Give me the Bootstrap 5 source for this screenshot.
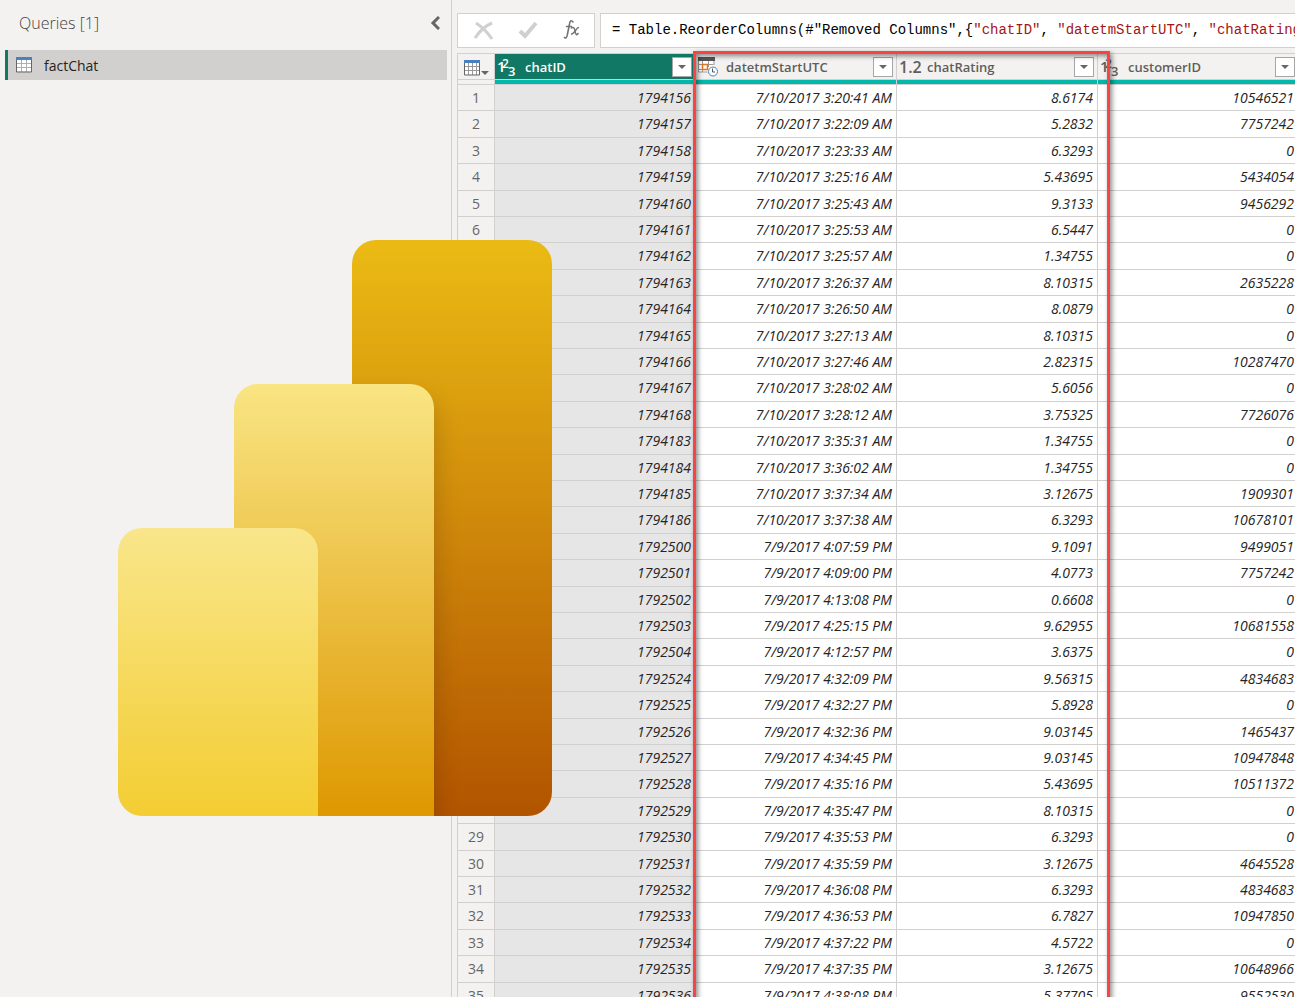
<!DOCTYPE html>
<html lang="en">
<head>
<meta charset="utf-8">
<meta name="viewport" content="width=device-width, initial-scale=1">
<title>Power Query Editor</title>
<link href="https://cdn.jsdelivr.net/npm/bootstrap@5.3.0/dist/css/bootstrap.min.css" rel="stylesheet">
<style>
  :root { --pane: #f3f2f1; --line: #d1d0ce; --green: #117865; --teal: #01b8aa; }
  body { background: var(--pane); font-family: "Open Sans", "Noto Sans", sans-serif; color: #252423; }
  .query-pane { width: 452px; border-right: 1px solid var(--line); padding: 0 4px 0 5px; }
  .pane-title { font-size: 16px; line-height: 24px; font-weight: 300; font-family: "Open Sans", sans-serif; color: #444; }
  .pane-head { height: 50px; padding: 0 7px 4px 14px; }
  .query-item { height: 30px; background: #d2d0ce; border-left: 3px solid var(--green); font-size: 14px; color: #252423; padding-left: 8px; gap: 11px; }
  .editor { padding: 13px 0 0 5px; }
  .bar-box { height: 35px; background: #fff; border: 1px solid var(--line); }
  .bar-tools { width: 138px; padding: 0 6px 0 10px; }
  .bar-tools button, .corner-btn { border: 0; background: none; padding: 0; display: flex; }
  .bar-tools button { width: 32px; justify-content: center; }
  .formula { border-right: 0; margin-left: 5px; font: 14px/33px "Liberation Mono", monospace; color: #000; padding-left: 11px; white-space: pre; }
  .formula .str { color: #a31515; }
  .grid-wrap { margin-top: 5px; }
  .data-grid { table-layout: fixed; width: 842px; border-collapse: separate; border-spacing: 0; border-left: 1px solid var(--line); border-top: 1px solid var(--line); }
  .data-grid th, .data-grid td { border-right: 1px solid var(--line); border-bottom: 1px solid var(--line); padding: 0; white-space: nowrap; }
  .col-num { width: 37px; }
  .col-data { width: 201px; }
  .data-grid thead th { height: 26px; background: var(--pane); font-size: 13px; line-height: 20px; font-weight: 600; color: #605e5c; }
  .data-grid thead th.picked { background: var(--green); color: #fff; }
  .head-cell { padding: 0 3px 0 2px; }
  .type-slot { width: 28px; display: flex; }
  .type-slot svg, .bar-tools svg { overflow: visible; }
  .drop-btn { width: 20px; height: 20px; padding: 0; border: 1px solid #a6a6a6; background: #fff; display: flex; align-items: center; justify-content: center; }
  .data-grid .quality td { height: 5px; line-height: 0; background: var(--teal); }
  .data-grid .quality td:first-child { background: var(--pane); }
  .data-grid tbody td { height: 26px; padding-right: 4px; background: #fff; text-align: right; font-size: 14px; line-height: 20px; font-style: italic; color: #252423; }
  .data-grid tbody th { background: var(--pane); text-align: center; font-size: 14px; line-height: 20px; font-weight: 400; color: #666; }
  .data-grid tbody tr:nth-child(5n+2) td, .data-grid tbody tr:nth-child(5n+4) td { height: 27px; }
  .data-grid tbody td:nth-child(2) { background: #e6e6e6; }
  .highlight { position: absolute; left: 236px; top: -2px; width: 417px; bottom: -10px; border: 3px solid #fb4343; box-shadow: 2px 2px 5px rgba(0,0,0,.45), inset 2px 2px 5px rgba(0,0,0,.45); pointer-events: none; }
  .pbi-logo { position: absolute; left: 118px; top: 240px; }
</style>
</head>
<body class="position-relative vh-100 overflow-hidden">
<div class="d-flex h-100">
  <aside class="query-pane flex-shrink-0">
    <div class="pane-head d-flex align-items-center justify-content-between">
      <h1 class="pane-title m-0">Queries [1]</h1>
      <button class="btn p-0 border-0 d-flex" aria-label="Collapse pane">
        <svg width="10" height="14" viewBox="0 0 10 14"><path d="M9 1L3 7l6 6" fill="none" stroke="#666" stroke-width="3"/></svg>
      </button>
    </div>
    <a href="#" class="query-item d-flex align-items-center text-decoration-none">
      <svg width="17" height="16" viewBox="0 0 17 16"><path fill="#fff" d="M.5.5h15v14H.5z"/><path d="M5.5 3v12M10.500 3v12M1 6.500h15M1 10.500h15" stroke="#b0b0b0" fill="none"/><path d="M.5 1v14h15V1" fill="none" stroke="#666"/><path fill="#4a80bd" d="M0 0h16v3H0z"/></svg>
      <span>factChat</span>
    </a>
  </aside>

  <main class="editor flex-grow-1 overflow-hidden">
    <div class="d-flex">
      <div class="bar-box bar-tools d-flex align-items-center justify-content-between flex-shrink-0">
        <button aria-label="Cancel"><svg width="20" height="18" viewBox="0 0 20 18"><path d="M2 1c6 4 12 10 16 16M18 1C11 4 5 10 1 16" fill="none" stroke="#d0d0d0" stroke-width="3"/></svg></button>
        <button aria-label="Accept"><svg width="18" height="18" viewBox="0 0 18 18"><path d="M1 9l5 5L17 1" fill="none" stroke="#d0d0d0" stroke-width="4"/></svg></button>
        <button aria-label="Insert step"><svg width="16" height="21" viewBox="0 0 16 21" fill="none" stroke="#737373" stroke-linecap="round"><path d="M9 2C7-.5 6 1 5.500 4L3.500 14C3 17.500 2 18.500.5 17.500" stroke-width="1.600"/><path d="M2.500 6.500h5M7.500 8c2-1.500 3 0 3.500 3s1.500 5 3 2.500" stroke-width="1.500"/><path d="M14.500 7.500c-2 0-4 6.500-7 6.500" stroke-width="1.400"/></svg></button>
      </div>
      <div class="bar-box formula flex-grow-1 overflow-hidden" role="textbox" aria-label="Formula">= Table.ReorderColumns(#"Removed Columns",{<span class="str">"chatID"</span>, <span class="str">"datetmStartUTC"</span>, <span class="str">"chatRating"</span></div>
    </div>

    <div class="grid-wrap position-relative">
      <table class="data-grid">
        <colgroup><col class="col-num"><col class="col-data"><col class="col-data"><col class="col-data"><col class="col-data"></colgroup>
        <thead>
          <tr>
            <th scope="col"><button class="corner-btn mx-auto" aria-label="Table options"><svg width="25" height="18" viewBox="0 0 25 18"><g transform="translate(0 2)"><path fill="#fff" d="M.5.5h15v14H.5z"/><path d="M4.500 3v12M8.500 3v12M12.500 3v12M1 6.500h15M1 10.500h15" stroke="#999" fill="none"/><path d="M.5 1v14h15V1" fill="none" stroke="#666"/><path fill="#4a80bd" d="M0 0h16v3H0z"/><path fill="#666" d="M17 11h8l-4 4z"/></g></svg></button></th>
            <th scope="col" class="picked"><div class="head-cell d-flex align-items-center"><span class="type-slot"><svg width="18" height="18" viewBox="0 0 18 18"><use href="#whole"/></svg></span><span class="flex-grow-1">chatID</span><button class="drop-btn" aria-label="Filter chatID"><svg width="8" height="4"><path fill="#666" d="M0 0h8L4 4z"/></svg></button></div></th>
            <th scope="col"><div class="head-cell d-flex align-items-center"><span class="type-slot"><svg width="21" height="20" viewBox="0 0 21 20"><path fill="#fff" d="M1 3h15v12H1z"/><path fill="#555" d="M0 0h17v4H0z"/><path d="M.5 4v11h9M4.500 4v11M10.500 4v6M.5 7.500h15M.5 12.500h9M16 4v4" fill="none" stroke="#999"/><path d="M4.500 7.500h5v5h-5z" fill="#fff" stroke="#e8731c" stroke-width="1.500"/><circle cx="15" cy="14.500" r="4.500" fill="#fff" stroke="#4a80bd"/><path d="M14.500 11.500v3.500H17" fill="none" stroke="#555"/></svg></span><span class="flex-grow-1">datetmStartUTC</span><button class="drop-btn" aria-label="Filter datetmStartUTC"><svg width="8" height="4"><path fill="#666" d="M0 0h8L4 4z"/></svg></button></div></th>
            <th scope="col"><div class="head-cell d-flex align-items-center"><span class="type-slot fs-6">1.2</span><span class="flex-grow-1">chatRating</span><button class="drop-btn" aria-label="Filter chatRating"><svg width="8" height="4"><path fill="#666" d="M0 0h8L4 4z"/></svg></button></div></th>
            <th scope="col"><div class="head-cell d-flex align-items-center"><span class="type-slot"><svg width="18" height="18" viewBox="0 0 18 18"><use href="#whole"/></svg></span><span class="flex-grow-1">customerID</span><button class="drop-btn" aria-label="Filter customerID"><svg width="8" height="4"><path fill="#666" d="M0 0h8L4 4z"/></svg></button></div></th>
          </tr>
          <tr class="quality"><td></td><td></td><td></td><td></td><td></td></tr>
        </thead>
        <tbody id="rows"></tbody>
      </table>
      <div class="highlight"></div>
    </div>
  </main>
</div>

<svg class="pbi-logo" width="434" height="576" viewBox="0 0 434 576" role="img" aria-label="Power BI">
  <defs>
    <g id="whole" fill="currentColor" font-family="Open Sans, sans-serif" font-weight="600"><text x="0" y="14" font-size="15">1</text><text x="5" y="10" font-size="12">2</text><text x="11" y="18" font-size="13">3</text></g>
    <linearGradient id="tall" x2="0" y2="1"><stop stop-color="#ebbb14"/><stop offset="1" stop-color="#b25400"/></linearGradient>
    <linearGradient id="mid" x2="0" y2="1"><stop stop-color="#f9e583"/><stop offset="1" stop-color="#de9800"/></linearGradient>
    <linearGradient id="low" x2="0" y2="1"><stop stop-color="#f9e68b"/><stop offset="1" stop-color="#f3cd32"/></linearGradient>
    <filter id="soft" x="-20%" y="-20%" width="140%" height="140%"><feGaussianBlur stdDeviation="11"/></filter>
    <clipPath id="tall-clip"><path d="M258 0h152a24 24 0 0 1 24 24v528a24 24 0 0 1-24 24H234V24a24 24 0 0 1 24-24z"/></clipPath>
  </defs>
  <path fill="url(#tall)" d="M258 0h152a24 24 0 0 1 24 24v528a24 24 0 0 1-24 24H234V24a24 24 0 0 1 24-24z"/>
  <g clip-path="url(#tall-clip)"><rect x="116" y="156" width="204" height="440" rx="24" fill="#000" opacity=".14" filter="url(#soft)"/></g>
  <path fill="url(#mid)" d="M140 144h152a24 24 0 0 1 24 24v408H116V168a24 24 0 0 1 24-24z"/>
  <path fill="url(#low)" d="M24 288h152a24 24 0 0 1 24 24v264H24a24 24 0 0 1-24-24V312a24 24 0 0 1 24-24z"/>
</svg>

<script>
const records = `1794156|7/10/2017 3:20:41 AM|8.6174|10546521
1794157|7/10/2017 3:22:09 AM|5.2832|7757242
1794158|7/10/2017 3:23:33 AM|6.3293|0
1794159|7/10/2017 3:25:16 AM|5.43695|5434054
1794160|7/10/2017 3:25:43 AM|9.3133|9456292
1794161|7/10/2017 3:25:53 AM|6.5447|0
1794162|7/10/2017 3:25:57 AM|1.34755|0
1794163|7/10/2017 3:26:37 AM|8.10315|2635228
1794164|7/10/2017 3:26:50 AM|8.0879|0
1794165|7/10/2017 3:27:13 AM|8.10315|0
1794166|7/10/2017 3:27:46 AM|2.82315|10287470
1794167|7/10/2017 3:28:02 AM|5.6056|0
1794168|7/10/2017 3:28:12 AM|3.75325|7726076
1794183|7/10/2017 3:35:31 AM|1.34755|0
1794184|7/10/2017 3:36:02 AM|1.34755|0
1794185|7/10/2017 3:37:34 AM|3.12675|1909301
1794186|7/10/2017 3:37:38 AM|6.3293|10678101
1792500|7/9/2017 4:07:59 PM|9.1091|9499051
1792501|7/9/2017 4:09:00 PM|4.0773|7757242
1792502|7/9/2017 4:13:08 PM|0.6608|0
1792503|7/9/2017 4:25:15 PM|9.62955|10681558
1792504|7/9/2017 4:12:57 PM|3.6375|0
1792524|7/9/2017 4:32:09 PM|9.56315|4834683
1792525|7/9/2017 4:32:27 PM|5.8928|0
1792526|7/9/2017 4:32:36 PM|9.03145|1465437
1792527|7/9/2017 4:34:45 PM|9.03145|10947848
1792528|7/9/2017 4:35:16 PM|5.43695|10511372
1792529|7/9/2017 4:35:47 PM|8.10315|0
1792530|7/9/2017 4:35:53 PM|6.3293|0
1792531|7/9/2017 4:35:59 PM|3.12675|4645528
1792532|7/9/2017 4:36:08 PM|6.3293|4834683
1792533|7/9/2017 4:36:53 PM|6.7827|10947850
1792534|7/9/2017 4:37:22 PM|4.5722|0
1792535|7/9/2017 4:37:35 PM|3.12675|10648966
1792536|7/9/2017 4:38:08 PM|5.37705|9552530`.split("\n");
document.getElementById("rows").innerHTML = records.map((r, i) =>
  `<tr><th scope="row">${i + 1}</th>${r.split("|").map(v => `<td>${v}</td>`).join("")}</tr>`).join("");
</script>
<script src="https://cdn.jsdelivr.net/npm/bootstrap@5.3.0/dist/js/bootstrap.bundle.min.js"></script>
</body>
</html>
